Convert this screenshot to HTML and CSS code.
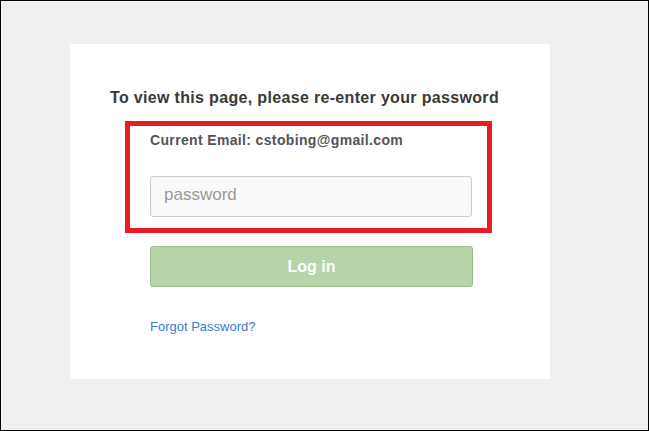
FILE: index.html
```html
<!DOCTYPE html>
<html>
<head>
<meta charset="utf-8">
<link rel="stylesheet" href="styles.css">
</head>
<body>
<div class="frame">
  <div class="card">
    <h1 class="title">To view this page, please re-enter your password</h1>
    <div class="highlight">
      <div class="email">Current Email: cstobing@gmail.com</div>
      <input class="pw" type="password" placeholder="password">
    </div>
    <button class="login">Log in</button>
    <a class="forgot" href="#">Forgot Password?</a>
  </div>
</div>
</body>
</html>
```
FILE: styles.css
```css
* { box-sizing: border-box; }
html, body { margin: 0; padding: 0; }
body { width: 649px; height: 431px; overflow: hidden; font-family: "Liberation Sans", Arial, sans-serif; }
.frame {
  width: 649px;
  height: 431px;
  border: 1px solid #000;
  background: #f0f0f0;
  padding: 43px 0 0 69px;
}
.card {
  width: 480px;
  height: 335px;
  background: #fff;
  padding: 45px 0 0 40px;
  display: flex;
  flex-direction: column;
  align-items: flex-start;
}
.title {
  margin: 0;
  font-size: 16px;
  font-weight: bold;
  color: #3a3a3a;
  line-height: 18px;
  letter-spacing: 0.33px;
}
.highlight {
  margin: 14px 0 0 15px;
  width: 367px;
  height: 112px;
  border: 5px solid #e81c24;
  padding: 4px 0 0 20px;
}
.email {
  font-size: 14px;
  font-weight: bold;
  color: #555;
  line-height: 20px;
  letter-spacing: 0.35px;
}
.pw {
  display: block;
  margin-top: 26px;
  width: 322px;
  height: 41px;
  border: 1px solid #ccc;
  border-radius: 3px;
  background: #f9f9f9;
  padding: 0 13px 3px;
  font-family: "Liberation Sans", Arial, sans-serif;
  font-size: 17px;
}
.pw::placeholder { color: #999; }
.login {
  margin: 13px 0 0 40px;
  width: 323px;
  height: 41px;
  border: 1px solid #9dbd90;
  border-radius: 3px;
  background: #b6d3aa;
  color: #fff;
  font-family: "Liberation Sans", Arial, sans-serif;
  font-size: 16px;
  font-weight: bold;
}
.forgot {
  margin: 32px 0 0 40px;
  font-size: 13px;
  color: #3b7bd4;
  text-decoration: none;
}
```
